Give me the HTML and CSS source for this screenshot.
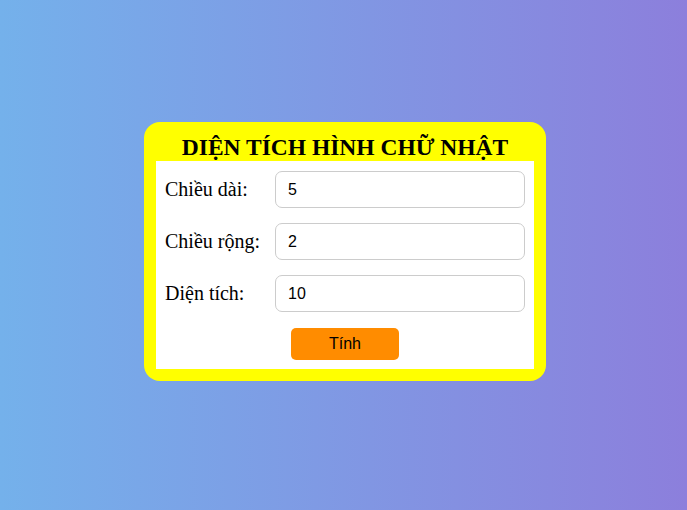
FILE: index.html
```html
<!DOCTYPE html>
<html lang="vi">
<head>
<meta charset="utf-8">
<title>Diện tích hình chữ nhật</title>
<link rel="stylesheet" href="styles.css">
</head>
<body>
<div class="card">
  <h2 class="title">DIỆN TÍCH HÌNH CHỮ NHẬT</h2>
  <form class="form">
    <div class="grid">
      <label class="label" for="dai">Chiều dài:</label>
      <input class="field" id="dai" type="text" value="5">
      <label class="label" for="rong">Chiều rộng:</label>
      <input class="field" id="rong" type="text" value="2">
      <label class="label" for="dt">Diện tích:</label>
      <input class="field" id="dt" type="text" value="10">
    </div>
    <div class="actions">
      <button class="btn" type="button">Tính</button>
    </div>
  </form>
</div>
</body>
</html>
```
FILE: styles.css
```css
html, body {
  margin: 0;
  height: 100%;
}
body {
  background: linear-gradient(to right, #74b1eb, #8c7fdc);
  font-family: "Liberation Serif", "Times New Roman", serif;
  display: flex;
  justify-content: center;
  padding-top: 122px;
  padding-left: 3px;
  box-sizing: border-box;
}
.card {
  width: 402px;
  height: 259px;
  box-sizing: border-box;
  background: #ffff00;
  border-radius: 16px;
  padding: 12px;
  display: flex;
  flex-direction: column;
}
.title {
  margin: 0;
  text-align: center;
  font-size: 23.5px;
  font-weight: bold;
  line-height: 27px;
  color: #000;
}
.form {
  flex: 1;
  background: #fff;
  margin-top: 0;
  padding: 10px 9px 0 9px;
  display: flex;
  flex-direction: column;
}
.grid {
  display: grid;
  grid-template-columns: 110px 1fr;
  row-gap: 15px;
  align-items: center;
}
.label {
  font-size: 20px;
  color: #000;
}
.field {
  height: 37px;
  box-sizing: border-box;
  border: 1px solid #cccccc;
  border-radius: 7px;
  padding: 0 12px;
  font-family: "Liberation Sans", Arial, sans-serif;
  font-size: 16px;
  color: #000;
  width: 100%;
  outline: none;
}
.actions {
  display: flex;
  justify-content: center;
  margin-top: 16px;
}
.btn {
  width: 108px;
  height: 32px;
  background: #ff8c00;
  border: none;
  border-radius: 5px;
  font-family: "Liberation Sans", Arial, sans-serif;
  font-size: 16px;
  color: #000;
  padding: 0;
}
```
